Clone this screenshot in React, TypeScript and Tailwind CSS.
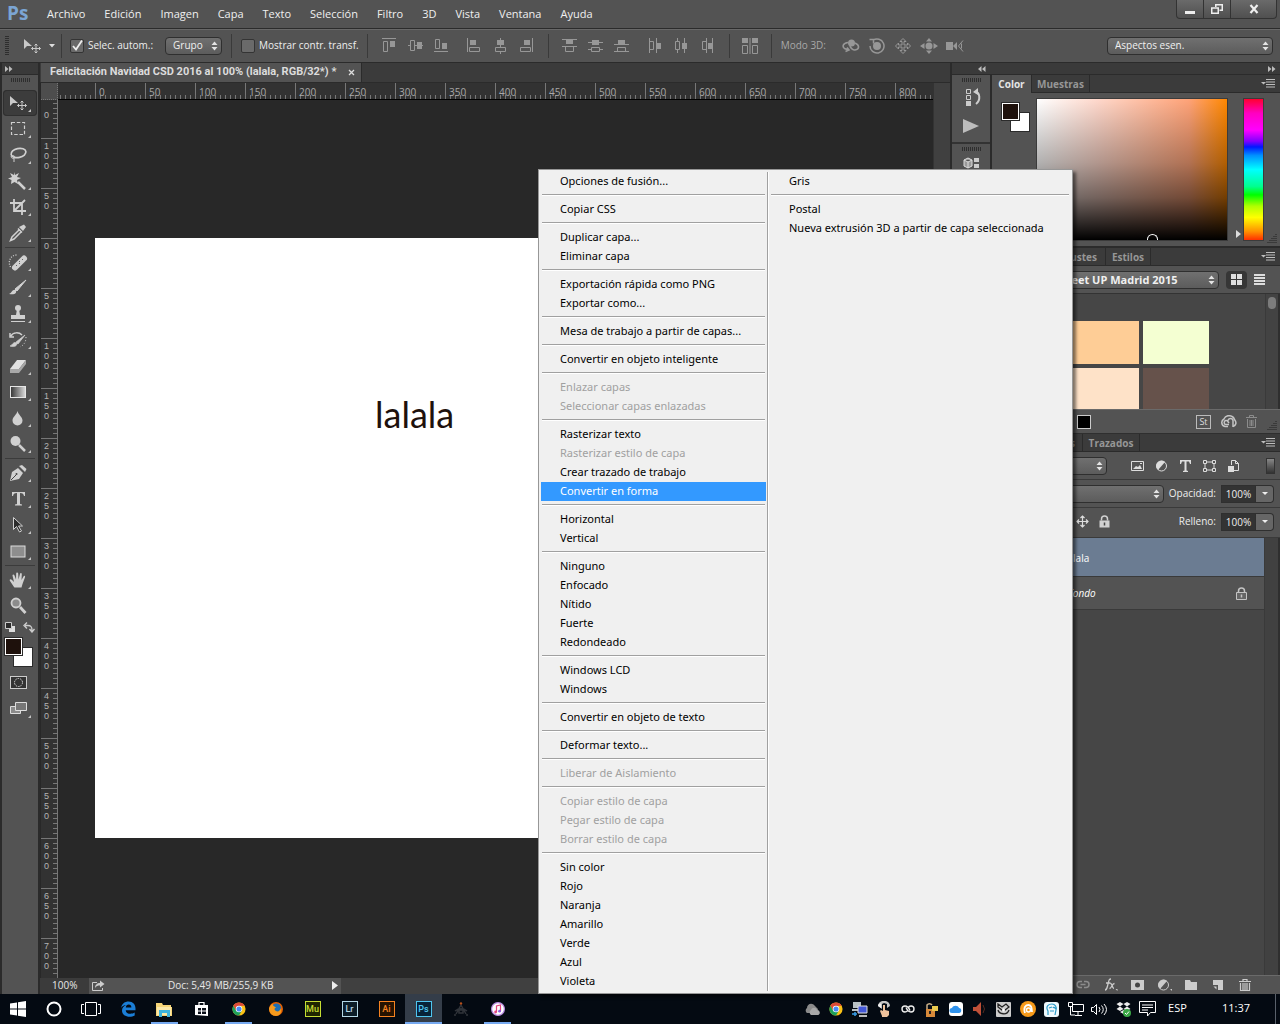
import React from "react";
import type { ReactNode } from "react";

type SvgProps = { w?: number; h?: number; children: ReactNode };

function Svg({ w = 16, h = 16, children }: SvgProps) {
  return (
    <svg width={w} height={h} viewBox={`0 0 ${w} ${h}`} fill="none" className="shrink-0" aria-hidden="true">
      {children}
    </svg>
  );
}

/* ---------- shared pieces ---------- */

function UpDown() {
  return (
    <Svg w={7} h={10}>
      <path d="M3.500 0.500L6.500 4H0.500zM3.500 9.500L6.500 6H0.500z" fill="#e4e4e4" />
    </Svg>
  );
}

function SelectBox({ label, value, className }: { label: string; value: string; className: string }) {
  return (
    <span className={`relative flex items-center ${className}`}>
      <select
        aria-label={label}
        defaultValue={value}
        className="h-[18px] w-full appearance-none rounded-sm border border-[#2f2f2f] bg-linear-to-b from-[#707070] to-[#5c5c5c] pl-[7px] text-[#f0f0f0] outline-none"
      >
        <option>{value}</option>
      </select>
      <span className="pointer-events-none absolute right-1">
        <UpDown />
      </span>
    </span>
  );
}

function Gripper() {
  return (
    <div className="mx-auto h-[4px] w-[19px] bg-[repeating-linear-gradient(90deg,#2e2e2e_0_1px,transparent_1px_2px)]" />
  );
}

function Divider() {
  return <span className="h-6 w-px shrink-0 bg-[#3a3a3a]" />;
}

function PanelMenu() {
  return (
    <button aria-label="Menú del panel" className="ml-auto mr-[5px] self-center">
      <Svg w={14} h={9}>
        <path d="M0 3h5L2.500 5.500z" fill="#bdbdbd" />
        <path d="M5 .5h9M5 3h9M5 5.500h9M5 8h9" stroke="#bdbdbd" />
      </Svg>
    </button>
  );
}

function MoveGlyph() {
  return (
    <>
      <path d="M7 6v10l3-3h5z" fill="#c9c9c9" />
      <path
        d="M19 11v9M14.500 15.500h9M17.500 12.500L19 11l1.500 1.500M17.500 18.500L19 20l1.500-1.500M16 14l-1.500 1.500L16 17M22 14l1.500 1.500L22 17"
        stroke="#c9c9c9"
      />
    </>
  );
}

/* ---------- menu bar ---------- */

const MENUS = ["Archivo", "Edición", "Imagen", "Capa", "Texto", "Selección", "Filtro", "3D", "Vista", "Ventana", "Ayuda"];

function MenuBar() {
  return (
    <header className="flex h-7 shrink-0 items-start bg-[#535353]">
      <span className="w-[38px] pl-[7px] text-[19px] leading-[26px] font-bold text-[#7ba5d3]">Ps</span>
      <nav className="flex gap-px text-[11px] leading-7 text-[#f0f0f0]">
        {MENUS.map((m) => (
          <button key={m} className="px-[9px] leading-7">
            {m}
          </button>
        ))}
      </nav>
      <div className="mr-[3px] ml-auto flex h-[19px] divide-x divide-[#333] rounded-b border border-t-0 border-[#333] bg-linear-to-b from-[#6a6a6a] to-[#505050]">
        <button aria-label="Minimizar" className="flex w-[27px] items-center justify-center">
          <Svg w={12} h={12}>
            <path d="M1 8h10v3H1z" fill="#eee" />
          </Svg>
        </button>
        <button aria-label="Restaurar" className="flex w-[27px] items-center justify-center">
          <Svg w={12} h={10}>
            <path d="M4.750 3V.75h6.500v5.500H8.500M.75 4h6.500v5.250H.75z" stroke="#eee" strokeWidth="1.500" />
          </Svg>
        </button>
        <button aria-label="Cerrar" className="flex w-[45px] items-center justify-center">
          <Svg w={10} h={10}>
            <path d="M1.500 1l7 8M8.500 1l-7 8" stroke="#eee" strokeWidth="2.200" />
          </Svg>
        </button>
      </div>
    </header>
  );
}

/* ---------- options bar ---------- */

const G = "#979797";

const ALIGN_A: { name: string; d: ReactNode }[] = [
  { name: "Alinear bordes superiores", d: <><path d="M0 .5h14M1.500 3.500h4v10h-4z" stroke={G} /><path d="M8 3h5v6H8z" fill={G} /></> },
  { name: "Alinear centros verticales", d: <><path d="M0 7.500h2M6 7.500h10M2.500 2.500h4v10h-4z" stroke={G} /><path d="M9 4h5v7H9z" fill={G} /></> },
  { name: "Alinear bordes inferiores", d: <><path d="M0 13.500h14M1.500 1.500h4v9h-4z" stroke={G} /><path d="M8 5h5v6H8z" fill={G} /></> },
];
const ALIGN_B: { name: string; d: ReactNode }[] = [
  { name: "Alinear bordes izquierdos", d: <><path d="M.5 0v14M2.500 9.500h10v4h-10z" stroke={G} /><path d="M3 2h6v5H3z" fill={G} /></> },
  { name: "Alinear centros horizontales", d: <><path d="M7.500 0v2M7.500 7v2M7.500 13v3M2.500 9.500h10v4h-10z" stroke={G} /><path d="M4 2h7v5H4z" fill={G} /></> },
  { name: "Alinear bordes derechos", d: <><path d="M13.500 0v14M1.500 9.500h10v4h-10z" stroke={G} /><path d="M5 2h6v5H5z" fill={G} /></> },
];
const DIST_A: { name: string; d: ReactNode }[] = [
  { name: "Distribuir bordes superiores", d: <><path d="M0 1.500h15M0 8.500h15M3.500 9v4.500h8V9" stroke={G} /><path d="M4 2h7v4H4z" fill={G} /></> },
  { name: "Distribuir centros verticales", d: <><path d="M0 4.500h15M0 11.500h3M12 11.500h3M3.500 9.500h8v4h-8z" stroke={G} /><path d="M4 2h7v5H4z" fill={G} /></> },
  { name: "Distribuir bordes inferiores", d: <><path d="M0 6.500h15M0 13.500h15M3.500 13V9.500h8V13" stroke={G} /><path d="M4 2h7v4H4z" fill={G} /></> },
];
const DIST_B: { name: string; d: ReactNode }[] = [
  { name: "Distribuir bordes izquierdos", d: <><path d="M1.500 0v15M8.500 0v15M2 3.500h3.500v8H2" stroke={G} /><path d="M9 5h4v6H9z" fill={G} /></> },
  { name: "Distribuir centros horizontales", d: <><path d="M3.500 0v3M3.500 12v3M10.500 0v15M1.500 3.500h4v8h-4z" stroke={G} /><path d="M8 5h5v6H8z" fill={G} /></> },
  { name: "Distribuir bordes derechos", d: <><path d="M6.500 0v15M12.500 0v15M6 3.500H2.500v8H6" stroke={G} /><path d="M8 5h4v6H8z" fill={G} /></> },
];
const MODE_3D: { name: string; d: ReactNode }[] = [
  { name: "Girar objeto 3D", d: <><circle cx="9.500" cy="5" r="3.500" fill={G} /><path d="M6 4.500C1 5 0 8.500 2.500 10.500l4 1.500M5 9.500l2 2.500-3.500 1.500M13 5c5 2 4.500 6.500 0 7-2 .2-4.500-2-5-4" stroke={G} strokeWidth="1.600" /></> },
  { name: "Rodar objeto 3D", d: <><circle cx="9" cy="8" r="4" fill={G} /><path d="M5 2.300a7 7 0 1 1-3 5.700M1.500 1.500h4v4" stroke={G} strokeWidth="1.500" /></> },
  { name: "Arrastrar objeto 3D", d: <path d="M9 .5l3 3h-2v3.500h3.500V5l3 3-3 3V9H10v3.500h2l-3 3-3-3h2V9H4.500v2l-3-3 3-3v2H8V3.500H6z" stroke={G} /> },
  { name: "Deslizar objeto 3D", d: <><circle cx="9" cy="8" r="3.500" fill={G} /><path d="M9 0l3 3.500H6zM9 16l3-3.500H6zM0 8l4.500-3v6zM18 8l-4.500-3v6z" fill={G} /></> },
  { name: "Escalar objeto 3D", d: <><path d="M0 4h7v8H0zM7 8l4-4v8z" fill={G} /><path d="M17 2.500L12.500 8l4.500 5.500M15.500 5.500v5" stroke={G} /></> },
];

function IconRow({ items, w = 15 }: { items: { name: string; d: ReactNode }[]; w?: number }) {
  return (
    <div className="flex">
      {items.map((i) => (
        <button key={i.name} aria-label={i.name} className="flex w-[26px] justify-center">
          <Svg w={w} h={16}>{i.d}</Svg>
        </button>
      ))}
    </div>
  );
}

function Check({ label, checked }: { label: string; checked: boolean }) {
  return (
    <label className="flex items-center gap-1 text-[10px] text-[#eee]">
      <span className="relative flex size-[14px]">
        <input
          type="checkbox"
          defaultChecked={checked}
          className="peer size-[14px] appearance-none rounded-xs border border-[#343434] bg-[#6a6a6a]"
        />
        <svg viewBox="0 0 14 14" className="pointer-events-none absolute inset-0 hidden peer-checked:block" fill="none" aria-hidden="true">
          <path d="M3 7l3 3.500L12 1.500" stroke="#eee" strokeWidth="1.800" />
        </svg>
      </span>
      {label}
    </label>
  );
}

function OptionsBar() {
  return (
    <div className="flex h-[35px] shrink-0 items-center border-t border-b border-[#2b2b2b] bg-[#535353] text-[10px] shadow-[inset_0_1px_0_#686868]">
      <div className="ml-[5px] h-[19px] w-[4px] bg-[repeating-linear-gradient(0deg,#2e2e2e_0_1px,transparent_1px_2px)]" />
      <button aria-label="Herramienta Mover" className="ml-2 flex items-center">
        <Svg w={26} h={26}><MoveGlyph /></Svg>
        <span className="ml-[6px]"><Svg w={7} h={4}><path d="M0 0h6L3 3.500z" fill="#ddd" /></Svg></span>
      </button>
      <span className="ml-[5px]" /><Divider />
      <span className="ml-2" />
      <Check label="Selec. autom.:" checked />
      <SelectBox label="Selección automática" value="Grupo" className="ml-[12px] w-[57px]" />
      <span className="ml-[9px]" /><Divider />
      <span className="ml-[9px]" />
      <Check label="Mostrar contr. transf." checked={false} />
      <span className="ml-[8px]" /><Divider />
      <span className="ml-[9px]" />
      <IconRow items={ALIGN_A} />
      <span className="ml-[7px]" />
      <IconRow items={ALIGN_B} />
      <span className="ml-[8px]" /><Divider />
      <span className="ml-[8px]" />
      <IconRow items={DIST_A} />
      <span className="ml-[8px]" />
      <IconRow items={DIST_B} />
      <span className="ml-[8px]" /><Divider />
      <button aria-label="Alinear capas automáticamente" className="mr-[13px] ml-[12px]">
        <Svg w={16} h={16}>
          <path d="M0 0h6v5H0zM10 0h6v5h-6z" fill={G} />
          <path d="M.5 7.500h5v8h-5zM10.500 7.500h5v8h-5zM8 0v16" stroke={G} />
        </Svg>
      </button>
      <Divider />
      <span className="mr-3 ml-[9px] text-[#a8a8a8]">Modo 3D:</span>
      <IconRow items={MODE_3D} w={18} />
      <SelectBox label="Espacio de trabajo" value="Aspectos esen." className="mr-[7px] ml-auto w-[166px]" />
    </div>
  );
}

/* ---------- tools ---------- */

const C = "#d0d0d0";

const TOOLS: ({ name: string; d: ReactNode; flat?: boolean } | null)[] = [
  { name: "Mover", d: <MoveGlyph /> },
  { name: "Marco rectangular", d: <path d="M8.500 6.500h13v12h-13z" stroke={C} strokeDasharray="3.500 1.800" strokeWidth="1.200" /> },
  { name: "Lazo", d: <><ellipse cx="15.500" cy="11" rx="7.500" ry="4.500" stroke={C} strokeWidth="1.700" transform="rotate(-12 15.500 11)" /><path d="M9 13c-2 2 0 4 2 3s0-3-2-2M11 16l0 4" stroke={C} /></> },
  { name: "Varita mágica", d: <><path d="M11 4l1 3 4-2-2 4 4 1-4 2 1 4-3.500-2L8 16l.5-4L5 10.500 9 9 7 5l4 2z" fill={C} /><path d="M15 14l7 7" stroke={C} strokeWidth="2.500" /></> },
  { name: "Recortar", d: <path d="M11 5v12h12M7 9h12v12M12 16l10-10" stroke={C} strokeWidth="1.800" /> },
  { name: "Cuentagotas", d: <><path d="M16 7l4 4 3-4-2-2.500z" fill={C} /><path d="M15 8.500l4 4M16 10l-7 7-1.500 3.500L11 19l7-7" stroke={C} strokeWidth="1.500" /></> },
  null,
  { name: "Pincel corrector puntual", d: <><path d="M12 18.500L21 9.500" stroke={C} strokeWidth="6" strokeLinecap="round" /><path d="M13 16l1 1M16 12l1 1M17 15l-1-1M19 10l1 1" stroke="#666" /><path d="M7.500 18c-3-5 0-12 6-12" stroke={C} strokeDasharray="1 1.500" strokeWidth="1.300" /></> },
  { name: "Pincel", d: <><path d="M23 5L14 16l-2-2z" fill={C} stroke={C} /><path d="M13 15c1 4-2 5-7 4 3-1 3-5 7-4z" fill={C} /></> },
  { name: "Tampón de clonar", d: <><circle cx="15" cy="7" r="3" fill={C} /><path d="M14 8h2l1 6h5v4H8v-4h5z" fill={C} /><path d="M8 20.500h14" stroke={C} /></> },
  { name: "Pincel de historia", d: <><path d="M22 8l-7 9-2-2zM14 16c0 4-4 4-7 3 3-1 3-5 7-3z" fill={C} stroke={C} strokeWidth=".7" /><path d="M8 9c2-4 8-4 11-1M7 6v4h4" stroke={C} strokeWidth="1.500" /><path d="M23 10c0 5-2 8-6 10" stroke={C} strokeDasharray="1 2" /></> },
  { name: "Borrador", d: <><path d="M7 16l7-9h9l-7 9z" fill="#e2e2e2" /><path d="M7 16h9v4H7zM16 16l7-9v4l-7 9z" fill="#a8a8a8" /></> },
  { name: "Degradado", d: <rect x="7.500" y="7.500" width="15" height="11" fill="url(#toolgrad)" stroke="#e6e6e6" /> },
  { name: "Desenfocar", d: <path d="M14.500 6c1 4 5 6 5 9.500a5 5 0 0 1-10 0C9.500 12 13.500 10 14.500 6z" fill={C} /> },
  { name: "Sobreexponer", d: <><circle cx="12.500" cy="10" r="5" fill={C} /><path d="M16 14l6 6" stroke={C} strokeWidth="2.500" /></> },
  null,
  { name: "Pluma", d: <><path d="M7 21l2-9 6-4 5 5-4 6z" fill={C} /><path d="M16 6l6 6 1.500-3L19 5z" fill={C} /><path d="M8 20l5-5" stroke="#444" /><circle cx="13.500" cy="14" r="1" fill="#444" /></> },
  { name: "Texto horizontal", d: <path d="M9 6h13v4h-1c-.5-2-1-3-4-3v11l2 .5v1h-7v-1l2-.5V7c-3 0-3.500 1-4 3H9z" fill={C} /> },
  { name: "Selección de trazado", d: <path d="M10.500 5.500v12l3-3 3 5.500 2-1-3-5h4z" fill="#2b2b2b" stroke={C} /> },
  { name: "Rectángulo", d: <rect x="8" y="8" width="14" height="11" fill="#8e8e8e" stroke="#dcdcdc" /> },
  null,
  { name: "Mano", d: <path d="M11 20l-4-6c-1-1.500.5-2.500 2-1l2 2-1.500-6.500c0-1.500 1.500-1.500 2 0l1.500 4 .2-6c0-1.500 1.800-1.500 2 0l.3 6L17 7c.3-1.500 1.800-1 1.800.3L18.500 13l2-3.500c.8-1.300 2-.5 1.500.7L19.500 17l-1 3.500h-7z" fill={C} /> },
  { name: "Zoom", flat: true, d: <><circle cx="13" cy="10" r="4.500" fill="#8c8c8c" stroke={C} strokeWidth="1.800" /><path d="M17 14l5.500 6" stroke={C} strokeWidth="2.800" /></> },
];

function Swatches() {
  return (
    <div className="grid h-[29px] w-[28px] grid-cols-[14px_14px] grid-rows-[14px_15px]">
      <div className="z-10 col-start-1 row-start-1 size-[19px] border border-[#2b2b2b] bg-white p-px">
        <div className="size-full bg-[#1e110c]" />
      </div>
      <div className="col-start-1 row-start-1 mt-[10px] ml-[9px] size-5 border border-[#2b2b2b] bg-white" />
    </div>
  );
}

function Toolbar() {
  return (
    <aside className="flex w-10 shrink-0 flex-col border-r-2 border-l-2 border-[#2b2b2b] bg-[#535353]">
      <div className="flex h-[12px] shrink-0 items-center border-b border-[#2b2b2b] bg-[#3a3a3a] pl-[3px]">
        <Svg w={8} h={6}><path d="M0 0l3.500 3L0 6zM4 0l3.500 3L4 6z" fill="#bbb" /></Svg>
      </div>
      <div className="pt-[3px] pb-2"><Gripper /></div>
      <svg width="0" height="0" className="absolute" aria-hidden="true">
        <linearGradient id="toolgrad"><stop stopColor="#333" /><stop offset="1" stopColor="#ddd" /></linearGradient>
      </svg>
      {TOOLS.map((t, i) =>
        t ? (
          <button
            key={i}
            aria-label={t.name}
            className={i === 0 ? "mx-px h-[26px] rounded-sm bg-[#3c3c3c] shadow-[inset_0_0_0_1px_#2f2f2f]" : "mx-px h-[26px]"}
          >
            <Svg w={31} h={26}>
              {t.d}
              {!t.flat && <path d="M28 19v3h-3z" fill="#c4c4c4" />}
            </Svg>
          </button>
        ) : (
          <div key={i} className="mx-[3px] my-px h-px shrink-0 bg-[#3b3b3b]" />
        ),
      )}
      <div className="flex h-[18px] shrink-0 justify-between px-[3px] pt-[3px]">
        <Svg w={10} h={10}><path d="M4 4h6v6H4z" fill="#ddd" /><path d="M.5.5h6v6h-6z" fill="#2b2b2b" stroke="#ccc" /></Svg>
        <Svg w={12} h={11}><path d="M2 3.500h3c3 0 4 1 4 5M4 .5l-3 3 3 3M6.500 7L9 10l2.500-3" stroke="#ccc" strokeWidth="1.400" /></Svg>
      </div>
      <div className="pl-[2px]"><Swatches /></div>
      <button aria-label="Máscara rápida" className="mt-[3px] mr-[3px] flex h-[26px] items-center justify-center">
        <Svg w={17} h={13}><rect x=".5" y=".5" width="16" height="12" fill="#333" stroke="#ccc" /><circle cx="8.500" cy="6.500" r="4" stroke="#ddd" strokeDasharray="1.500 1" /></Svg>
      </button>
      <button aria-label="Modo de pantalla" className="h-[26px] pl-px">
        <Svg w={31} h={26}>
          <path d="M7.500 11.500h10v7h-10z" fill="#8a8a8a" stroke="#ddd" />
          <path d="M12.500 7.500h11v8h-11z" fill="#777" stroke="#ddd" />
          <path d="M28 20v3h-3z" fill="#c4c4c4" />
        </Svg>
      </button>
    </aside>
  );
}

/* ---------- document ---------- */

const H_LABELS = Array.from({ length: 17 }, (_, i) => String(i * 50));
const V_LABELS = ["100", "50", ...Array.from({ length: 15 }, (_, i) => String(i * 50))];

function HorizontalRuler() {
  return (
    <div className="flex h-[17px] shrink-0 bg-[#323232]">
      <div className="w-[17px] shrink-0 border-r border-b border-dotted border-[#777] bg-[#4d4d4d]" />
      <div className="flex min-w-0 flex-1 overflow-hidden border-b border-black text-[10px] leading-4 text-[#a9a9a9]">
        <div className="w-[37px] shrink-0 bg-[repeating-linear-gradient(90deg,transparent_0_2px,#777_2px_3px,transparent_3px_5px)] bg-[length:100%_4px] bg-bottom bg-no-repeat" />
        {H_LABELS.map((l) => (
          <div
            key={l}
            className="w-[50px] shrink-0 border-l border-[#777] bg-[repeating-linear-gradient(90deg,transparent_0_4px,#777_4px_5px)] bg-[length:100%_4px] bg-bottom bg-no-repeat pl-[3px] leading-[19px]"
          >
            {l}
          </div>
        ))}
      </div>
    </div>
  );
}

function VerticalRuler() {
  return (
    <div className="flex w-[17px] shrink-0 flex-col overflow-hidden border-r border-[#777] bg-[#323232] font-['Liberation_Sans'] text-[9px] leading-[10px] text-[#b4b4b4]">
      <div className="h-[38px] shrink-0 bg-[repeating-linear-gradient(180deg,transparent_0_3px,#777_3px_4px,transparent_4px_5px)] bg-[length:4px_100%] bg-right bg-no-repeat pt-[10px] pl-[3px]">0</div>
      {V_LABELS.map((l, i) => (
        <div
          key={i}
          className="flex h-[50px] shrink-0 flex-col border-t border-[#777] bg-[repeating-linear-gradient(180deg,transparent_0_4px,#777_4px_5px)] bg-[length:4px_100%] bg-right bg-no-repeat pt-[2px] pl-[3px]"
        >
          {l.split("").map((c, k) => (
            <span key={k}>{c}</span>
          ))}
        </div>
      ))}
    </div>
  );
}

function DocumentArea() {
  return (
    <main className="flex min-w-0 flex-1 flex-col bg-[#282828]">
      <div className="flex h-5 shrink-0 border-b border-[#2b2b2b] bg-[#3b3b3b]">
        <div className="ml-px flex items-center border-r border-[#2b2b2b] bg-[#535353] pr-[6px] pl-[9px]">
          <span className="font-[Roboto] text-[11px] font-bold whitespace-nowrap text-[#dcdcdc]">Felicitación Navidad CSD 2016 al 100% (lalala, RGB/32*) *</span>
          <button aria-label="Cerrar documento" className="ml-3"><Svg w={7} h={7}><path d="M1 1l5 5M6 1L1 6" stroke="#ddd" strokeWidth="1.300" /></Svg></button>
        </div>
      </div>
      <div className="flex min-h-0 flex-1 pl-px">
        <div className="flex min-w-0 flex-1 flex-col">
          <HorizontalRuler />
          <div className="flex min-h-0 flex-1 overflow-hidden">
            <VerticalRuler />
            <div className="min-w-0 flex-1 overflow-hidden pt-[138px] pl-[37px]">
              <div className="h-[600px] w-[800px] bg-white pt-[151px] pl-[280px] font-[Lato] text-[36px] leading-[50px] text-[#1e110c]">lalala</div>
            </div>
          </div>
        </div>
        <div className="w-[17px] shrink-0 border-l border-[#333] bg-[#404040]" />
      </div>
      <div className="flex h-4 shrink-0 items-center bg-[#404040] text-[10px] text-[#e8e8e8]">
        <span className="flex h-full w-[49px] items-center bg-[#3b3b3b] pb-px pl-3">100%</span>
        <div className="flex h-full w-[252px] items-center bg-[#535353] pb-px pl-[3px]">
          <Svg w={13} h={11}><path d="M5 2.500H.5v8h10V8" stroke="#ccc" /><path d="M3 8c0-3 2-5 5-5V.5L12.500 4 8 7.500V5.500c-2 0-4 .5-5 2.500z" fill="#ccc" /></Svg>
          <span className="flex-1 pl-[63px]">Doc: 5,49 MB/255,9 KB</span>
          <Svg w={9} h={9}><path d="M0 0l6 4.500L0 9z" fill="#eee" /></Svg>
        </div>
      </div>
    </main>
  );
}

/* ---------- right dock ---------- */

function IconStrip() {
  return (
    <div className="flex w-10 shrink-0 flex-col border-r-2 border-[#2b2b2b] bg-[#535353]">
      <div className="flex flex-col items-center border-b-2 border-[#333] pt-[3px] pb-[9px]">
        <Gripper />
        <button aria-label="Historia" className="mt-[6px] ml-1">
          <Svg w={17} h={19}><path d="M1.500 1.500h4v4h-4zM1.500 7.500h4v4h-4z" stroke="#ccc" /><path d="M1 13h5v5H1z" fill="#ccc" /><path d="M10 4c5 0 6 8 1 12" stroke="#ccc" strokeWidth="2" /><path d="M8 4l5-4v7z" fill="#ccc" /></Svg>
        </button>
        <button aria-label="Acciones" className="mt-[12px]">
          <Svg w={16} h={14}><path d="M0 0l16 7-16 7z" fill="#bdbdbd" /></Svg>
        </button>
      </div>
      <div className="flex flex-col items-center pt-[3px]">
        <Gripper />
        <button aria-label="3D" className="mt-[5px]">
          <Svg w={16} h={16}><path d="M5 2l4 2v6l-4 2-4-2V4z M1 4l4 2 4-2M5 6v6" fill="#999" stroke="#ddd" /><path d="M11 2h5v4h-5zM11 8h5v4h-5z" fill="#ccc" /></Svg>
        </button>
      </div>
    </div>
  );
}

function Tabs({ tabs }: { tabs: { label: string; cls: string }[] }) {
  return (
    <div className="flex h-[18px] shrink-0 border-b border-[#2b2b2b] bg-[#3b3b3b] text-[10px] font-bold" role="tablist">
      {tabs.map((t) => (
        <button key={t.label} role="tab" className={`h-[18px] overflow-hidden border-r border-[#2b2b2b] ${t.cls}`}>
          {t.label}
        </button>
      ))}
      <PanelMenu />
    </div>
  );
}

const ACTIVE = "bg-[#535353] text-[#e4e4e4]";
const IDLE = "text-[#969696]";

function ResizeCorner({ className }: { className: string }) {
  return (
    <span className={className}>
      <Svg w={10} h={10}>
        <path d="M9 0v1M7 2v1M9 2v1M5 4v1M7 4v1M9 4v1M3 6v1M5 6v1M7 6v1M9 6v1M1 8v1M3 8v1M5 8v1M7 8v1M9 8v1" stroke="#222" />
      </Svg>
    </span>
  );
}

function ColorPanel() {
  return (
    <section className="border-b-2 border-[#2b2b2b]">
      <Tabs tabs={[{ label: "Color", cls: `w-10 ${ACTIVE}` }, { label: "Muestras", cls: `w-[58px] ${IDLE}` }]} />
      <div className="flex h-[153px] pt-[5px] pl-[9px]">
        <div className="mt-[4px] w-[35px]"><Swatches /></div>
        <div className="h-[143px] w-[192px] border border-[#3b3b3b] bg-[linear-gradient(to_top,#000_0%,rgba(0,0,0,0.55)_30%,rgba(0,0,0,0.3)_55%,rgba(0,0,0,0)_100%),linear-gradient(to_right,#fff,#ffd8cb_32%,#ffa378_80%,#ff8800)]">
          <div className="flex h-full items-end overflow-hidden pl-[110px]">
            <div className="h-[6px] w-[11px] rounded-t-full border border-b-0 border-white" />
          </div>
        </div>
        <div className="flex w-[15px] items-end justify-end pb-[8px]"><Svg w={7} h={8}><path d="M0 0l5 4-5 4z" fill="#ddd" /></Svg></div>
        <div className="h-[143px] w-[21px] border border-[#3b3b3b] bg-[linear-gradient(to_bottom,#ff0030,#ff00c0_10%,#ff00ff_22%,#8000ff_30%,#0018ff_34%,#0090ff_40%,#00ffff_50%,#00ff90_62%,#00ff00_68%,#b0ff00_76%,#ffff00_84%,#ff9000_94%,#ff3000)]" />
        <ResizeCorner className="mt-auto mr-[3px] mb-[2px] ml-auto" />
      </div>
    </section>
  );
}

function LibraryPanel() {
  return (
    <section className="border-b border-[#2f2f2f]">
      <Tabs
        tabs={[
          { label: "Bibliotecas", cls: `w-[60px] ${ACTIVE}` },
          { label: "Ajustes", cls: `w-[54px] text-right pr-2 ${IDLE}` },
          { label: "Estilos", cls: `w-[45px] ${IDLE}` },
        ]}
      />
      <div className="flex h-7 items-center border-b border-[#333]">
        <SelectBox label="Biblioteca" value="CSD Meet UP Madrid 2015" className="ml-2 w-[219px] text-[11px] font-bold [&_select]:pl-[36px]" />
        <button aria-label="Cuadrícula" className="ml-[7px] flex h-[18px] w-[21px] items-center justify-center rounded-sm bg-[#363636]">
          <Svg w={11} h={11}><path d="M0 0h5v5H0zM6 0h5v5H6zM0 6h5v5H0zM6 6h5v5H6z" fill="#ddd" /></Svg>
        </button>
        <button aria-label="Lista" className="ml-[7px]"><Svg w={11} h={11}><path d="M0 1h11M0 4h11M0 7h11M0 10h11" stroke="#ddd" strokeWidth="2" /></Svg></button>
      </div>
      <div className="flex h-[115px] bg-[#464646]">
        <div className="ml-auto grid h-full grid-cols-[66px_66px] grid-rows-[43px_41px] gap-x-1 gap-y-[4px] pt-[27px]">
          <div className="bg-[#fecd96]" />
          <div className="bg-[#f4ffd2]" />
          <div className="bg-[#fee2c8]" />
          <div className="bg-[#66524b]" />
        </div>
        <div className="ml-[56px] w-[13px] border-l border-[#3a3a3a] bg-[#434343] pt-[3px] pl-[2px]"><div className="h-3 w-2 rounded-sm bg-[#7c7c7c]" /></div>
        <div className="w-[2px] bg-[#2f2f2f]" />
      </div>
      <div className="flex h-[24px] items-center border-t border-[#6a6a6a] pr-[3px]">
        <div className="mr-auto ml-[85px] size-[14px] border border-[#ccc] bg-black" />
        <span className="flex h-[14px] w-[15px] items-center justify-center border border-[#bbb] text-[9px] leading-3 text-[#ddd]">St</span>
        <button aria-label="Creative Cloud" className="ml-[9px]">
          <Svg w={17} h={14}>
            <path d="M8 11.500H5a4 4 0 0 1-1-7.500C6-1 13 0 14.500 4.500c2.500 3 1.500 6-1.500 7" stroke="#c4c4c4" strokeWidth="1.500" />
            <path d="M9 9.500H6a2 2 0 1 1 1.500-3.500l1.500 2M8 5.500a2.500 2.500 0 0 1 5 1V12" stroke="#c4c4c4" strokeWidth="1.500" />
          </Svg>
        </button>
        <button aria-label="Eliminar de la biblioteca" className="mr-[10px] ml-[9px]"><Svg w={11} h={13}><path d="M0 2.500h11M3.500 2V.5h4V2M1.500 4v8.500h8V4M4 5v6M5.500 5v6M7 5v6" stroke="#8c8c8c" /></Svg></button>
        <ResizeCorner className="mt-2" />
      </div>
    </section>
  );
}

function PercentField({ label }: { label: string }) {
  return (
    <label className="flex items-center text-[10px] text-[#eee]">
      {label}
      <input defaultValue="100%" className="ml-[5px] h-[18px] w-[35px] border border-[#2f2f2f] bg-[#333] text-center text-[#eee] outline-none" />
      <span className="flex h-[18px] w-[18px] items-center justify-center rounded-r-sm border border-l-0 border-[#2f2f2f] bg-[#666]">
        <Svg w={6} h={3}><path d="M0 0h6L3 3z" fill="#eee" /></Svg>
      </span>
    </label>
  );
}

function Lock({ color, open }: { color: string; open?: boolean }) {
  return (
    <Svg w={11} h={13}>
      <path d="M2.500 5.500V4a3 3 0 0 1 6 0v1.500" stroke={color} strokeWidth="1.500" />
      <path d="M.5 5.500h10v7H.5z" fill={open ? "#666" : color} stroke={open ? color : undefined} />
      <path d="M5.500 7.500v3" stroke={open ? color : "#444"} strokeWidth="1.500" />
    </Svg>
  );
}

const LAYER_FILTERS: { name: string; d: ReactNode }[] = [
  { name: "Filtrar píxeles", d: <><path d="M.5 1.500h12v9H.5z" stroke="#ddd" /><path d="M2 9l3-3 2 1 2-2 2 4zM9 3h2v1H9z" fill="#ddd" /></> },
  { name: "Filtrar ajustes", d: <><circle cx="6.500" cy="6" r="5" stroke="#ddd" /><path d="M3 10A5 5 0 0 1 10 2z" fill="#ddd" /></> },
  { name: "Filtrar texto", d: <path d="M1 0h11v4h-1l-1-2.500H7.500v9l1.500.5v1H4v-1l1.500-.5v-9H3L2 4H1z" fill="#ddd" /> },
  { name: "Filtrar formas", d: <path d="M3 2h7M3 10h7M2 3v6M11 3v6M.5.5h3v3h-3zM9.500.5h3v3h-3zM.5 8.500h3v3h-3zM9.500 8.500h3v3h-3z" stroke="#ddd" /> },
  { name: "Filtrar objetos inteligentes", d: <><path d="M4.500 5V.5h4l3 3v7H7M8.500.5v3h3" stroke="#ddd" /><path d="M1 6h6v6H1z" fill="#ddd" /></> },
];

const LAYER_ACTIONS: { name: string; d: ReactNode }[] = [
  { name: "Enlazar capas", d: <path d="M6 3.500H4a2.500 2.500 0 0 0 0 6h2M8 3.500h2a2.500 2.500 0 0 1 0 6H8M4.500 6.500h5" stroke="#8d8d8d" strokeWidth="1.500" /> },
  { name: "Estilo de capa", d: <><path d="M2 12c2 0 2-2 3-6s1-5 3-5M3 5h4.500M6.500 10.500c2 0 2.500-5 5-5M7.500 5.500c2 0 1.500 5 3.500 5" stroke="#ccc" strokeWidth="1.300" /><path d="M12.500 11h2v2z" fill="#ccc" /></> },
  { name: "Máscara de capa", d: <><path d="M1 2h13v10H1z" fill="#ccc" /><circle cx="7.500" cy="7" r="2.500" fill="#444" /></> },
  { name: "Capa de ajuste", d: <><circle cx="6.500" cy="7" r="5" stroke="#ccc" /><path d="M3 11A5 5 0 0 1 10 3z" fill="#ccc" /><path d="M13 11h2v2z" fill="#ccc" /></> },
  { name: "Grupo nuevo", d: <path d="M1 2h5l1 2h6v8H1z" fill="#ccc" /> },
  { name: "Capa nueva", d: <><path d="M2 2h10v10H7V7H2z" fill="#ccc" /><path d="M2.500 8.500h3v3z" fill="#ccc" /></> },
  { name: "Eliminar capa", d: <path d="M1 3.500h12M5 3V1.500h4V3M2.500 5v7.500h9V5M5 5v7M7 5v7M9 5v7" stroke="#ccc" strokeWidth="1.200" /> },
];

function LayersPanel() {
  return (
    <section className="flex min-h-0 flex-1 flex-col">
      <Tabs
        tabs={[
          { label: "Capas", cls: `w-11 ${ACTIVE}` },
          { label: "Canales", cls: `w-[47px] text-right pr-2 ${IDLE}` },
          { label: "Trazados", cls: `w-[57px] ${IDLE}` },
        ]}
      />
      <div className="flex h-7 shrink-0 items-center border-b border-[#3a3a3a] text-[10px]">
        <SelectBox label="Tipo de filtro" value="Tipo" className="ml-2 w-[107px]" />
        <div className="ml-[18px] flex">
          {LAYER_FILTERS.map((f) => (
            <button key={f.name} aria-label={f.name} className="flex w-6 justify-center"><Svg w={13} h={12}>{f.d}</Svg></button>
          ))}
        </div>
        <div className="mr-[5px] ml-auto h-4 w-[9px] border border-[#333] bg-linear-to-b from-[#888] to-[#333]" />
      </div>
      <div className="flex h-7 shrink-0 items-center justify-between border-b border-[#3a3a3a] pr-[6px] text-[10px]">
        <SelectBox label="Modo de fusión" value="Normal" className="ml-2 w-[164px]" />
        <PercentField label="Opacidad:" />
      </div>
      <div className="flex h-[30px] shrink-0 items-center border-b border-[#3a3a3a] pr-[6px] pb-[2px]">
        <button aria-label="Bloquear posición" className="ml-[84px]">
          <Svg w={13} h={13}><path d="M6.500 1v11M1 6.500h11M4.500 3l2-2 2 2M4.500 10l2 2 2-2M3 4.500l-2 2 2 2M10 4.500l2 2-2 2" stroke="#ddd" strokeWidth="1.200" /></Svg>
        </button>
        <button aria-label="Bloquear todo" className="mr-auto ml-[10px]"><Lock color="#d0d0d0" /></button>
        <PercentField label="Relleno:" />
      </div>
      <div className="flex min-h-0 flex-1 bg-[#464646]">
        <div className="flex-1 text-[10px] text-white">
          <button className="flex h-[39px] w-full items-center border-b border-[#3a3a3a] bg-[#6b7c92] pt-[3px] pl-[73px]">lalala</button>
          <button className="flex h-[33px] w-full items-center border-b border-[#3a3a3a] bg-[#535353] pr-[17px] pl-[76px] italic">
            <span className="mr-auto">Fondo</span>
            <Lock color="#c4c4c4" open />
          </button>
        </div>
        <div className="w-[14px] border-l border-[#3a3a3a] bg-[#414141]" />
        <div className="w-[2px] bg-[#2f2f2f]" />
      </div>
      <div className="flex h-[19px] shrink-0 items-center border-t border-[#6a6a6a] pl-[78px]">
        {LAYER_ACTIONS.map((a) => (
          <button key={a.name} aria-label={a.name} className="flex w-[27px] justify-center"><Svg w={15} h={14}>{a.d}</Svg></button>
        ))}
      </div>
    </section>
  );
}

function Dock() {
  return (
    <aside className="flex w-[330px] shrink-0 flex-col border-l-2 border-[#2b2b2b] bg-[#535353]">
      <div className="flex h-[12px] shrink-0 items-center border-b border-[#2b2b2b] bg-[#3a3a3a]">
        <span className="ml-[26px]"><Svg w={8} h={6}><path d="M3.500 0v6L0 3zM7.500 0v6L4 3z" fill="#bbb" /></Svg></span>
        <span className="mr-1 ml-auto"><Svg w={8} h={6}><path d="M0 0l3.500 3L0 6zM4 0l3.500 3L4 6z" fill="#bbb" /></Svg></span>
      </div>
      <div className="flex min-h-0 flex-1">
        <IconStrip />
        <div className="flex min-w-0 flex-1 flex-col">
          <ColorPanel />
          <LibraryPanel />
          <LayersPanel />
        </div>
      </div>
    </aside>
  );
}

/* ---------- context menu ---------- */

type Item = string | { off: string } | { on: string } | null;

const LEFT_ITEMS: Item[] = [
  "Opciones de fusión...", null,
  "Copiar CSS", null,
  "Duplicar capa...", "Eliminar capa", null,
  "Exportación rápida como PNG", "Exportar como...", null,
  "Mesa de trabajo a partir de capas...", null,
  "Convertir en objeto inteligente", null,
  { off: "Enlazar capas" }, { off: "Seleccionar capas enlazadas" }, null,
  "Rasterizar texto", { off: "Rasterizar estilo de capa" }, "Crear trazado de trabajo", { on: "Convertir en forma" }, null,
  "Horizontal", "Vertical", null,
  "Ninguno", "Enfocado", "Nítido", "Fuerte", "Redondeado", null,
  "Windows LCD", "Windows", null,
  "Convertir en objeto de texto", null,
  "Deformar texto...", null,
  { off: "Liberar de Aislamiento" }, null,
  { off: "Copiar estilo de capa" }, { off: "Pegar estilo de capa" }, { off: "Borrar estilo de capa" }, null,
  "Sin color", "Rojo", "Naranja", "Amarillo", "Verde", "Azul", "Violeta",
];
const RIGHT_ITEMS: Item[] = ["Gris", null, "Postal", "Nueva extrusión 3D a partir de capa seleccionada"];

function MenuColumn({ items, className }: { items: Item[]; className: string }) {
  return (
    <div className={className}>
      {items.map((it, i) => {
        if (it === null) return <div key={i} role="separator" className="mx-px mt-[3px] mb-1 h-[2px] border-t border-[#a0a0a0] bg-white" />;
        if (typeof it === "string")
          return <button key={i} role="menuitem" className="block h-[19px] w-full pb-px pl-[19px] text-left leading-[18px] text-black">{it}</button>;
        if ("off" in it)
          return <button key={i} role="menuitem" disabled className="block h-[19px] w-full pb-px pl-[19px] text-left leading-[18px] text-[#a0a0a0]">{it.off}</button>;
        return <button key={i} role="menuitem" className="block h-[19px] w-full bg-[#3399ff] pb-px pl-[19px] text-left leading-[18px] text-white">{it.on}</button>;
      })}
    </div>
  );
}

function ContextMenu() {
  return (
    <div
      role="menu"
      className="absolute top-[169px] left-[538px] z-20 flex border border-[#979797] bg-[#f0f0f0] p-[2px] font-['Noto_Sans','Open_Sans',sans-serif] text-[11px] whitespace-nowrap shadow-[3px_3px_3px_rgba(0,0,0,0.5)]"
    >
      <MenuColumn items={LEFT_ITEMS} className="w-[225px]" />
      <div className="mr-px ml-px w-[2px] border-l border-[#a0a0a0] bg-white" />
      <MenuColumn items={RIGHT_ITEMS} className="w-[300px]" />
    </div>
  );
}

/* ---------- taskbar ---------- */

function AppTile({ text, color, bg }: { text: string; color: string; bg: string }) {
  return (
    <span className="flex size-4 items-center justify-center border font-[Roboto] text-[9px] leading-none font-medium" style={{ color, borderColor: color, background: bg }}>
      {text}
    </span>
  );
}

function Chrome({ s }: { s: number }) {
  return (
    <svg width={s} height={s} viewBox="0 0 16 16" aria-hidden="true">
      <circle cx="8" cy="8" r="7.500" fill="#fbc116" />
      <path d="M1.500 4.250A7.500 7.500 0 0 1 14.500 4.250L8 4.500 4.750 9.900z" fill="#dc4a38" />
      <path d="M1.500 4.250A7.500 7.500 0 0 0 8 15.500L11.200 9.900 4.800 9.900z" fill="#1ea05a" />
      <circle cx="8" cy="8" r="3.700" fill="#fff" />
      <circle cx="8" cy="8" r="2.900" fill="#4a8af4" />
    </svg>
  );
}

const APPS: { name: string; icon: ReactNode; state?: "open" | "active" }[] = [
  { name: "Inicio", icon: <Svg w={16} h={16}><path d="M0 2.500l7-1v6H0zM8 1.300L16 0v7.500H8zM0 8.500h7v6l-7-1zM8 8.500h8V16l-8-1.200z" fill="#fff" /></Svg> },
  { name: "Cortana", icon: <Svg w={16} h={16}><circle cx="8" cy="8" r="6.500" stroke="#fff" strokeWidth="2" /></Svg> },
  { name: "Vista de tareas", icon: <Svg w={20} h={14}><path d="M4.500.5h11v13h-11zM3 2.500H.5v9H3M17 2.500h2.500v9H17" stroke="#fff" /></Svg> },
  { name: "Edge", icon: <Svg w={16} h={16}><path d="M1 7C2 2.500 5 .5 8.500.5c4.500 0 7 3.200 7 7v1.700H5.700c.2 2.600 2.300 3.600 4.700 3.600 1.700 0 3-.4 4.300-1.200v3c-1.500.9-3.200 1.200-5 1.200C5.500 15.800 2 13.500 2 9.800c0-2.600 1.700-4.700 4-5.700C3.800 4.300 2 5.500 1 7zm4.800-.6h5.600c0-2-1-3-2.700-3-1.600 0-2.700 1.200-2.900 3z" fill="#1b7ed6" /></Svg> },
  { name: "Explorador", state: "open", icon: <Svg w={17} h={15}><path d="M0 1h6l1 2h8v2h1v9H0z" fill="#f6d577" /><path d="M1 5h14v8H1z" fill="#fce9a8" /><path d="M3 8h11v7h-3v-4H6v4H3z" fill="#3fb4dc" /></Svg> },
  { name: "Tienda", icon: <Svg w={15} h={16}><path d="M5 4V1.500h5V4" stroke="#fff" strokeWidth="1.200" /><path d="M1 4h13v11L1 14z" fill="#fff" /><path d="M4 7h3v2.500H4zM8 7h4v2.500H8zM4 10.500h3V13H4zM8 10.500h4V13H8z" fill="#0a0f18" /></Svg> },
  { name: "Chrome", state: "open", icon: <Chrome s={14} /> },
  { name: "Firefox", icon: <Svg w={14} h={14}><circle cx="7" cy="7" r="7" fill="#e66000" /><circle cx="7.500" cy="6" r="4.500" fill="#1c6fb5" /><path d="M0 6c1-1 2-4 4-4-1 2 2 2 3 4-2 0-2 2 0 3s4 0 5-3c1 4-1 8-5 8S0 11 0 6z" fill="#f59a1d" /></Svg> },
  { name: "Muse", icon: <AppTile text="Mu" color="#c6dd33" bg="#1f2600" /> },
  { name: "Lightroom", icon: <AppTile text="Lr" color="#b5d8e6" bg="#0c1d28" /> },
  { name: "Illustrator", icon: <AppTile text="Ai" color="#f58220" bg="#261300" /> },
  { name: "Photoshop", state: "active", icon: <AppTile text="Ps" color="#4fc6f0" bg="#082338" /> },
  { name: "Inkscape", icon: <Svg w={14} h={15}><path d="M7 3L2 12M7 3l5 9M1 9c4-3 8-3 12 0M1 12v2M13 12v2M5 8h4v3H5z" stroke="#30343a" strokeWidth="1.500" /><circle cx="7" cy="1.500" r="1.200" fill="#b8501c" /></Svg> },
  { name: "iTunes", state: "open", icon: <Svg w={14} h={14}><circle cx="7" cy="7" r="6.400" fill="#fff" stroke="#b78be0" strokeWidth="1.200" /><path d="M5.500 10V4l4-1v6" stroke="#e2457f" strokeWidth="1.200" /><circle cx="4.600" cy="10" r="1.400" fill="#e2457f" /><circle cx="8.600" cy="9.200" r="1.400" fill="#8f5be0" /></Svg> },
];

const TRAY: { name: string; icon: ReactNode }[] = [
  { name: "OneDrive", icon: <Svg w={16} h={12}><path d="M3 10a3 3 0 0 1 0-5c0-4 5-6 8-2l3 3-1 4z" fill="#8a8a8a" /><path d="M7 12a3 3 0 0 1 0-5c1-3 5-3 6 0 3 0 4 4 1 5z" fill="#a8a8a8" /></Svg> },
  { name: "Chrome", icon: <Chrome s={14} /> },
  { name: "Equipos en red", icon: <Svg w={16} h={15}><path d="M1 0h8v6H1zM0 7h9v2H0z" fill="#b8c0c4" /><path d="M6 4h9v7H6z" fill="#4358d8" stroke="#ddd" /><path d="M7 13h8v2H7z" fill="#bbb" /><path d="M0 12h5M3 10v4" stroke="#3a9ee8" strokeWidth="1.500" /></Svg> },
  { name: "Tableta", icon: <Svg w={14} h={16}><path d="M1 5c0-7 12-7 12 0l-3 2V3L7 2 5 3v5z" fill="#c4c4c4" /><path d="M1 5c0-2 2-3 3-2v4z" fill="#eee" /><path d="M5 15l-2-5 1-1 2 1V4h2v5l4 1v4l-2 2H5z" fill="#f0c39c" /></Svg> },
  { name: "Creative Cloud", icon: <Svg w={14} h={10}><path d="M9 6.500C7.500 3 6 2 4 2a3 3 0 0 0 0 6c1.500 0 2.500-1 3-2M5 3.500C6.500 7 8 8 10 8a3 3 0 0 0 0-6C8.500 2 7.500 3 7 4" stroke="#eee" strokeWidth="1.400" /></Svg> },
  { name: "Seguridad", icon: <Svg w={14} h={15}><path d="M2 7V3a3 3 0 0 1 5 0" stroke="#c9b089" strokeWidth="1.500" /><path d="M1 7h9v8H1z" fill="#d88a3a" /><path d="M7 4h6v5H7z" fill="#e9c94e" /><path d="M5 9v3" stroke="#222" strokeWidth="2" /></Svg> },
  { name: "iCloud", icon: <Svg w={14} h={14}><rect width="14" height="14" rx="3" fill="#fff" /><path d="M3 11a2.500 2.500 0 0 1 0-5c1-3 6-3 7 0 3 0 3 5 0 5z" fill="#2f93ee" /></Svg> },
  { name: "Sonido", icon: <Svg w={14} h={14}><path d="M0 5h3l5-5v14L3 9H0z" fill="#c05038" /><path d="M10 3q3 4 0 8" stroke="#5b2a1e" /></Svg> },
  { name: "Disco", icon: <Svg w={15} h={15}><rect width="15" height="15" rx="1" fill="#ccc" /><path d="M2 2l4 3 4-3 3 3-4 3H6L2 5zM2 8c1 4 9 6 11 0" stroke="#222" strokeWidth="1.300" /><circle cx="7.500" cy="8" r="1.500" fill="#fff" /></Svg> },
  { name: "Avast", icon: <Svg w={16} h={16}><circle cx="8" cy="8" r="8" fill="#f79a1a" /><path d="M5 12c-2-6 1-8 3.500-8S12 6 12 11" stroke="#fff" strokeWidth="1.800" /><circle cx="8.500" cy="9" r="2" stroke="#fff" strokeWidth="1.500" /></Svg> },
  { name: "Asistente", icon: <Svg w={15} h={15}><rect width="15" height="15" rx="3" fill="#eef8fc" /><path d="M4 13V9C1 4 5 2 8 2s5 3 4 6l-1 5M5 6l3-1M9 6a1 1 0 1 1 2 1M6 9h4" stroke="#2a9ac8" strokeWidth="1.200" /></Svg> },
  { name: "Red", icon: <Svg w={16} h={14}><path d="M4.500 2.500h11v7h-11zM10 10v3M7 13.500h7M.5.5h4v4h-4zM2.500 5v8H7" stroke="#fff" /></Svg> },
  { name: "Volumen", icon: <Svg w={17} h={13}><path d="M.5 4.500h2l3-3v10l-3-3h-2zM8 4q2 2.500 0 5M10.500 2.500q3.500 4 0 8M13 1q5 5.500 0 11" stroke="#fff" /></Svg> },
  { name: "Dropbox", icon: <Svg w={15} h={15}><path d="M4 0l3.500 2L4 4.500.5 2zM11 0l3.500 2L11 4.500 7.500 2zM4 4.500L7.500 7 4 9 .5 7zM11 4.500L14.500 7 11 9 7.500 7zM4 10l3.500-2L11 10l-3.500 2z" fill="#eee" /><circle cx="11" cy="11" r="4" fill="#3aa845" /><path d="M9 11l1.500 1.500L13 9.500" stroke="#fff" /></Svg> },
  { name: "Notificaciones", icon: <Svg w={17} h={16}><path d="M.5.5h16v11h-5l-3 3.500v-3.500h-8zM3 4h11M3 6.500h11M3 9h6" stroke="#fff" /></Svg> },
];

function Taskbar() {
  return (
    <footer className="flex h-[30px] shrink-0 bg-[#040a12] text-[11px] text-white">
      {APPS.map((a, i) => (
        <button
          key={a.name}
          aria-label={a.name}
          className={`relative flex items-center justify-center ${i === 0 ? "w-[35px]" : "w-[37px]"} ${a.state === "active" ? "bg-[#343d49]" : ""}`}
        >
          {a.icon}
          {a.state && <span className={`absolute bottom-0 h-[2px] bg-[#76a9f0] ${a.state === "active" ? "w-full" : "w-[27px]"}`} />}
        </button>
      ))}
      <div className="mr-2 ml-auto flex">
        {TRAY.map((t) => (
          <button key={t.name} aria-label={t.name} className="flex w-6 items-center justify-center">{t.icon}</button>
        ))}
      </div>
      <button className="w-[19px] pb-px">ESP</button>
      <time className="mr-[25px] ml-[35px] self-center pb-px">11:37</time>
      <span className="mr-[4px] w-px bg-[#59606a]" />
    </footer>
  );
}

export default function App() {
  return (
    <div className="relative flex h-screen flex-col overflow-hidden bg-[#282828] font-['Open_Sans','Noto_Sans',sans-serif]">
      <MenuBar />
      <OptionsBar />
      <div className="flex min-h-0 flex-1">
        <Toolbar />
        <DocumentArea />
        <Dock />
      </div>
      <Taskbar />
      <ContextMenu />
    </div>
  );
}
